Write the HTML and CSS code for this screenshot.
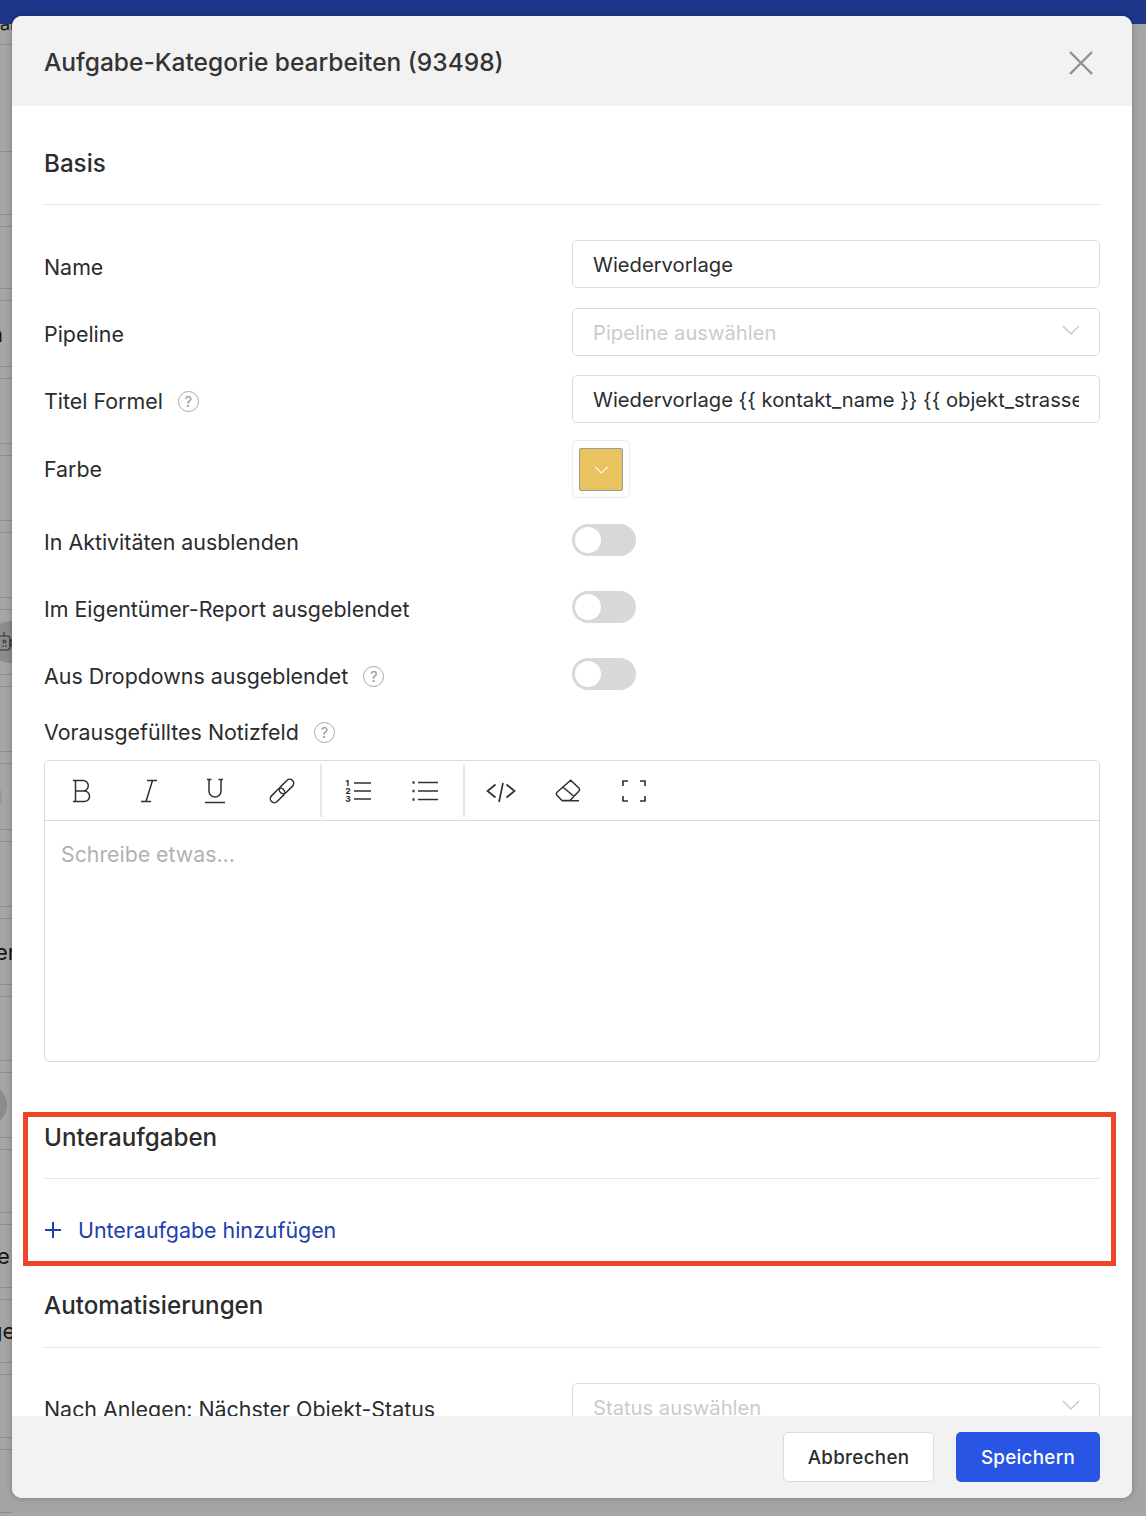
FILE: index.html
```html
<!DOCTYPE html>
<html lang="de">
<head>
<meta charset="utf-8">
<title>Aufgabe-Kategorie bearbeiten</title>
<link rel="stylesheet" href="styles.css">
</head>
<body>
<div class="page">
  <div class="topbar"></div>
  <div class="strip">
    <div class="bg-line bg-line--head"><span class="bg-text bg-text--head">ai</span></div>
    <div class="bg-line bg-line--tall"></div>
    <div class="bg-line bg-line--mid"></div>
    <div class="bg-row bg-row--first"></div>
    <div class="bg-row bg-row--long"><span class="bg-text bg-text--n">n</span></div>
    <div class="bg-row"></div>
    <div class="bg-row"></div>
    <div class="bg-row"></div>
    <div class="bg-row">
      <span class="bg-avatar">
        <svg class="robot" viewBox="0 0 14 20" width="14" height="20" fill="none" stroke="#333" stroke-width="1.1">
          <path d="M4 0v4"/><rect x="-6" y="4" width="16" height="14" rx="3"/><rect x="10" y="8" width="2" height="6"/><circle cx="4.500" cy="9.500" r="1.500"/><path d="M-3 14h2M2 14h2M5 14h2"/>
        </svg>
      </span>
    </div>
    <div class="bg-row"></div>
    <div class="bg-row bg-row--long"><span class="bg-circle bg-circle--faint"></span></div>
    <div class="bg-row"></div>
    <div class="bg-row bg-row--long"><span class="bg-text bg-text--er">er</span></div>
    <div class="bg-row bg-row--p76"></div>
    <div class="bg-row"><span class="bg-circle"></span></div>
    <div class="bg-row bg-row--short"></div>
    <div class="bg-row bg-row--short"><span class="bg-text bg-text--e">e</span></div>
    <div class="bg-row bg-row--short"><span class="bg-text bg-text--ge">ge</span></div>
    <div class="bg-row bg-row--short"></div>
    <div class="bg-row bg-row--short"></div>
  </div>

  <section class="modal">
    <header class="modal-head">
      <h1 class="modal-title">Aufgabe-Kategorie bearbeiten (93498)</h1>
      <svg class="close" viewBox="0 0 24 24" width="24" height="24" fill="none" stroke="#8f9194" stroke-width="2.400">
        <path d="M1 1l22 22M23 1L1 23"/>
      </svg>
    </header>

    <div class="modal-body">
      <h2 class="section-title section-title--first">Basis</h2>

      <div class="row row--name">
        <div class="label">Name</div>
        <div class="field"><span class="field-text">Wiedervorlage</span></div>
      </div>
      <div class="row row--pipeline">
        <div class="label">Pipeline</div>
        <div class="field field--select">
          <span class="field-text field-text--ph">Pipeline auswählen</span>
          <svg class="chev" viewBox="0 0 18 10" width="18" height="10" fill="none" stroke="#c5c7cd" stroke-width="1.400"><path d="M1 1l8 8 8-8"/></svg>
        </div>
      </div>
      <div class="row row--titel">
        <div class="label">Titel Formel <span class="help">?</span></div>
        <div class="field field--clip"><span class="field-text">Wiedervorlage {{ kontakt_name }} {{ objekt_strasse }} {{ objekt_ort }}</span></div>
      </div>
      <div class="row row--farbe">
        <div class="label label--mid">Farbe</div>
        <div class="color-box">
          <div class="swatch">
            <svg viewBox="0 0 16 9" width="15" height="8" fill="none" stroke="#fff" stroke-width="1.200"><path d="M1 1l7 7 7-7"/></svg>
          </div>
        </div>
      </div>
      <div class="row row--toggle row--t1">
        <div class="label label--toggle">In Aktivitäten ausblenden</div>
        <div class="toggle"><span class="knob"></span></div>
      </div>
      <div class="row row--toggle">
        <div class="label label--toggle">Im Eigentümer-Report ausgeblendet</div>
        <div class="toggle"><span class="knob"></span></div>
      </div>
      <div class="row row--toggle">
        <div class="label label--toggle">Aus Dropdowns ausgeblendet <span class="help">?</span></div>
        <div class="toggle"><span class="knob"></span></div>
      </div>

      <div class="label label--block">Vorausgefülltes Notizfeld <span class="help">?</span></div>
      <div class="editor">
        <div class="toolbar">
          <div class="tb-group">
            <span class="tb-btn"><svg class="ico" viewBox="0 0 32 32"><path d="M7 5.500h10a5.300 5.300 0 0 1 0 10.600H9.500M9.500 5.500v21M9.500 16h8.800a5.200 5.200 0 0 1 0 10.500H7"/></svg></span>
            <span class="tb-btn"><svg class="ico" viewBox="0 0 32 32"><path d="M14 5.500h10M8 26.500h10M19.500 5.500l-6.500 21"/></svg></span>
            <span class="tb-btn"><svg class="ico" viewBox="0 0 32 32"><path d="M10 4.500v11.500a6 6 0 0 0 12 0V4.500M8 4.500h4.500M19.500 4.500H24M6 27.500h20"/></svg></span>
            <span class="tb-btn"><svg class="ico" viewBox="0 0 32 32"><rect x="12" y="7.500" width="17" height="8" rx="4" transform="rotate(-45 20.500 11.500)"/><rect x="3" y="16.500" width="17" height="8" rx="4" transform="rotate(-45 11.500 20.500)"/></svg></span>
          </div>
          <div class="tb-group">
            <span class="tb-btn"><svg class="ico" viewBox="0 0 32 32"><path class="ol-lines" d="M12 8h17M12 16h17M12 24h17"/><text class="ol-num" x="3.500" y="10.500">1</text><text class="ol-num" x="3.500" y="18.500">2</text><text class="ol-num" x="3.500" y="26.500">3</text></svg></span>
            <span class="tb-btn"><svg class="ico" viewBox="0 0 32 32"><path class="ol-lines" d="M9 7.500h20M9 16h20M9 24.500h20"/><path class="dots" d="M3.500 7.500h2M3.500 16h2M3.500 24.500h2"/></svg></span>
          </div>
          <div class="tb-group tb-group--last">
            <span class="tb-btn"><svg class="ico ico--code" viewBox="0 0 32 32"><path d="M10.500 9.500l-8 6.500 8 6.500M21.500 9.500l8 6.500-8 6.500M18 8l-4 19"/></svg></span>
            <span class="tb-btn"><svg class="ico" viewBox="0 0 32 32"><path d="M18.700 5.200l8.600 8.300q.8 1.500-.3 2.500L18 25.500H10L4.700 20q-1.100-1.500.3-2.800zM10.700 12l11.500 9.500M10 25.700h17"/></svg></span>
            <span class="tb-btn"><svg class="ico ico--bold" viewBox="0 0 32 32"><path d="M5 11V6h5M22 6h5v5M27 21v5h-5M10 26H5v-5"/></svg></span>
          </div>
        </div>
        <div class="editor-area">Schreibe etwas...</div>
      </div>

      <h2 class="section-title section-title--sub">Unteraufgaben</h2>
      <div class="add-link">
        <svg viewBox="0 0 18 18" width="18" height="18" fill="none" stroke="#1e40af" stroke-width="2"><path d="M9 1v16M1 9h16"/></svg>
        <span>Unteraufgabe hinzufügen</span>
      </div>

      <h2 class="section-title section-title--auto">Automatisierungen</h2>
      <div class="row">
        <div class="label label--low">Nach Anlegen: Nächster Objekt-Status</div>
        <div class="field field--select">
          <span class="field-text field-text--ph">Status auswählen</span>
          <svg class="chev" viewBox="0 0 18 10" width="18" height="10" fill="none" stroke="#c5c7cd" stroke-width="1.400"><path d="M1 1l8 8 8-8"/></svg>
        </div>
      </div>
    </div>

    <footer class="modal-foot">
      <button class="btn btn--ghost" type="button">Abbrechen</button>
      <button class="btn btn--primary" type="button">Speichern</button>
    </footer>
  </section>

  <div class="highlight"></div>
</div>
</body>
</html>
```

FILE: styles.css
```css
* { box-sizing: border-box; }
html, body { margin: 0; padding: 0; }
body { font-family: Inter, "Liberation Sans", sans-serif; color: #2b2c2e; }

.page {
  position: relative;
  width: 1146px;
  height: 1516px;
  overflow: hidden;
  background: #a5a5a5;
}
.topbar { height: 24px; background: #1e3689; }

/* dimmed list behind the dialog */
.strip { width: 12px; overflow: hidden; }
.bg-line { border-bottom: 1px solid #8e8e8e; }
.bg-line--head { height: 21px; overflow: hidden; display: flex; align-items: flex-start; }
.bg-line--tall { height: 107px; }
.bg-line--mid { height: 63px; margin-bottom: 11px; }
.bg-row {
  display: flex;
  align-items: center;
  height: 66px;
  margin-bottom: 11px;
  border-top: 1px solid #8e8e8e;
  border-bottom: 1px solid #8e8e8e;
  white-space: nowrap;
}
.bg-row--first { height: 63px; }
.bg-row--long { height: 67px; }
.bg-row--p76 { height: 65px; }
.bg-row--short { height: 64px; }
.bg-text { font-size: 22px; line-height: 26px; color: #151515; }
.bg-text--head { font-size: 18px; margin-top: -13px; }
.bg-text--n { margin-left: -10px; }
.bg-text--er { margin-left: -5px; }
.bg-text--e { margin-left: -3px; }
.bg-text--ge { margin-left: -11px; }
.bg-avatar {
  flex: none;
  width: 42px;
  height: 42px;
  margin-left: -10px;
  border-radius: 50%;
  background: #8b8b8b;
  display: flex;
  align-items: center;
  padding-left: 10px;
}
.robot { flex: none; overflow: visible; }
.bg-circle {
  flex: none;
  width: 42px;
  height: 42px;
  margin-left: -35px;
  border-radius: 50%;
  background: #8b8b8b;
}
.bg-circle--faint { margin-left: -40px; background: #979797; }

/* dialog */
.modal {
  position: absolute;
  left: 12px;
  top: 16px;
  width: 1120px;
  height: 1482px;
  display: flex;
  flex-direction: column;
  background: #fff;
  border-radius: 10px;
  overflow: hidden;
  box-shadow: 0 0 6px rgba(0, 0, 0, .25);
}
.modal-head {
  flex: none;
  height: 90px;
  display: flex;
  align-items: center;
  justify-content: space-between;
  padding: 0 39px 0 32px;
  background: #f2f2f2;
}
.modal-title { margin: 2px 0 0; font-size: 24.500px; line-height: 30px; font-weight: 450; color: #333436; }
.close { flex: none; margin-top: 4px; }

.modal-body { flex: 1; min-height: 0; overflow: hidden; padding: 42px 32px 0; }

.section-title {
  margin: 0 0 35px;
  padding-bottom: 26px;
  height: 57px;
  border-bottom: 1px solid #e5e5e5;
  font-size: 24.200px;
  line-height: 30px;
  font-weight: 450;
  color: #2b2c2e;
}
.section-title--first { margin-top: 1px; height: 56px; padding-bottom: 25px; }
.section-title--sub { margin: 60px 0 0; padding-top: 1px; padding-bottom: 25px; }
.section-title--auto { margin-top: 46px; }

.row { display: grid; grid-template-columns: 528px 528px; align-items: start; }
.row--pipeline { margin-top: 20px; }
.row--titel { margin-top: 19px; }
.row--farbe { margin-top: 17px; }
.row--toggle { margin-top: 35px; }
.row--t1 { margin-top: 26px; }

.label {
  display: flex;
  align-items: center;
  gap: 15px;
  height: 32px;
  margin-top: 10px;
  font-size: 21.400px;
  line-height: 32px;
  color: #2b2c2e;
}
.row--name .label { margin-top: 11px; }
.label--mid { margin-top: 13px; }
.label--toggle { margin-top: 0; padding-top: 4px; }
.label--low { margin-top: 10px; }
.label--block { margin-top: 26px; margin-bottom: 12px; height: 32px; }

.help {
  flex: none;
  width: 21px;
  height: 21px;
  border: 1.500px solid #a8a8a8;
  border-radius: 50%;
  display: flex;
  align-items: center;
  justify-content: center;
  font-size: 15px;
  line-height: 1;
  color: #9a9a9a;
}

.field {
  display: flex;
  align-items: center;
  height: 48px;
  padding: 2px 18px 0 20px;
  border: 1.500px solid #dcdcdf;
  border-radius: 5px;
  background: #fff;
  font-size: 20.200px;
  color: #2b2c2e;
}
.field--clip { padding-right: 20px; }
.field-text { flex: 1; min-width: 0; overflow: hidden; white-space: nowrap; line-height: 28px; }
.field-text--ph { color: #c9cbd3; }
.field--select { position: relative; }
.chev { position: absolute; right: 19px; top: 16px; }

.color-box {
  width: 58px;
  height: 58px;
  padding: 7px 6px;
  border: 1px solid #ececec;
  border-radius: 5px;
}
.swatch {
  width: 44px;
  height: 43px;
  display: flex;
  align-items: center;
  justify-content: center;
  background: #e8c35f;
  border: 1px solid #9a9a9a;
  border-radius: 2px;
}

.toggle { width: 64px; height: 32px; padding: 3px; border-radius: 16px; background: #d7d8da; }
.knob { display: block; width: 26px; height: 26px; border-radius: 50%; background: #fff; }

/* editor */
.editor { height: 302px; border: 1.500px solid #dcdcdf; border-radius: 5px; }
.toolbar { display: flex; height: 60px; padding-left: 4px; border-bottom: 1.500px solid #dcdcdf; }
.tb-group { display: flex; align-items: center; margin: 3px 3px 3px 0; padding-right: 5px; border-right: 2px solid #e8e8e8; }
.tb-group--last { border-right: 0; }
.tb-btn { display: flex; align-items: center; justify-content: center; width: 66.500px; height: 100%; }
.ico { width: 32px; height: 32px; fill: none; stroke: #2f3032; stroke-width: 1.500; }
.ico--bold { stroke-width: 1.600; }
.ico--code { stroke-width: 1.700; }
.ol-lines { stroke-width: 1.700; }
.dots { stroke-width: 2.400; }
.ol-num { font-family: Inter, sans-serif; font-size: 8px; font-weight: 800; fill: #2f3032; stroke: none; }
.editor-area { padding: 18px 16px; font-size: 21.300px; line-height: 30px; color: #b1b1b1; }

.add-link {
  display: flex;
  align-items: center;
  gap: 16px;
  height: 30px;
  margin-top: 36px;
  font-size: 21.400px;
  color: #1e40af;
}

/* footer */
.modal-foot {
  flex: none;
  height: 82px;
  display: flex;
  justify-content: flex-end;
  gap: 22px;
  padding: 16px 32px;
  background: #f2f2f2;
}
.btn {
  height: 50px;
  border-radius: 5px;
  font-family: inherit;
  font-size: 18.800px;
  font-weight: 450;
  letter-spacing: .3px;
}
.btn--ghost { width: 151px; border: 1.500px solid #dcdcdf; background: #fff; color: #2b2c2e; }
.btn--primary { width: 144px; border: 0; background: #2855e3; color: #fff; }

/* annotation over the page */
.highlight {
  position: absolute;
  left: 23px;
  top: 1112px;
  width: 1093px;
  height: 154px;
  border: 5px solid #ee4428;
  pointer-events: none;
}
```
